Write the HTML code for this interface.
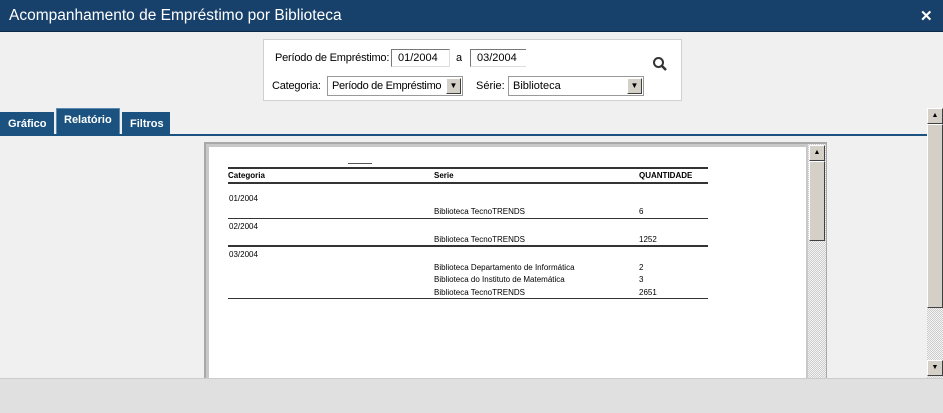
<!DOCTYPE html>
<html><head><meta charset="utf-8"><style>
*{margin:0;padding:0;box-sizing:border-box}
body{width:943px;height:413px;overflow:hidden;background:#f0f0f0;font-family:"Liberation Sans",sans-serif;position:relative}
.abs{position:absolute}
.t{font-size:11px;color:#000;white-space:nowrap;overflow:hidden}
.r{font-size:8px;font-weight:normal;color:#000;white-space:nowrap;position:absolute}
.b{font-weight:bold}
.ln{position:absolute;left:228px;width:480px;background:#333}
</style></head><body>
<div class="abs" style="left:0;top:0;width:943px;height:32px;background:#17406a;border-bottom:1px solid #0d2a47"></div>
<div class="abs" style="left:9px;top:7px;color:#fff;font-size:15.5px">Acompanhamento de Empréstimo por Biblioteca</div>
<div class="abs" style="left:920px;top:7px;color:#fff;font-size:15px;font-weight:bold">✕</div>

<div class="abs" style="left:263px;top:39px;width:419px;height:62px;background:#fff;border:1px solid #d0d0d0"></div>
<div class="abs t" style="left:275px;top:52px;letter-spacing:-0.2px">Período de Empréstimo:</div>
<div class="abs t" style="left:391px;top:49px;width:59px;height:18px;border:1px solid #777;border-right-color:#ddd;border-bottom-color:#ddd;padding:2px 0 0 6px">01/2004</div>
<div class="abs t" style="left:456px;top:52px">a</div>
<div class="abs t" style="left:470px;top:49px;width:56px;height:18px;border:1px solid #777;border-right:none;border-bottom-color:#ddd;padding:2px 0 0 6px">03/2004</div>
<svg class="abs" style="left:652px;top:56px" width="16" height="16" viewBox="0 0 16 16"><circle cx="6.5" cy="6.5" r="4.5" fill="none" stroke="#333" stroke-width="2"/><line x1="10" y1="10" x2="14" y2="14" stroke="#333" stroke-width="2.5"/></svg>
<div class="abs t" style="left:272px;top:80px;letter-spacing:-0.2px">Categoria:</div>
<div class="abs t" style="left:327px;top:76px;width:136px;height:20px;border:1px solid #999;background:#fff;padding:3px 0 0 4px;letter-spacing:-0.3px">Período de Empréstimo</div>
<div class="abs" style="left:446px;top:78px;width:15px;height:16px;background:#d4d0c8;border:1px solid #fff;border-right-color:#404040;border-bottom-color:#404040;font-size:8px;text-align:center;line-height:14px">▼</div>
<div class="abs t" style="left:476px;top:80px">Série:</div>
<div class="abs t" style="left:508px;top:76px;width:136px;height:20px;border:1px solid #999;background:#fff;padding:3px 0 0 4px">Biblioteca</div>
<div class="abs" style="left:627px;top:78px;width:15px;height:16px;background:#d4d0c8;border:1px solid #fff;border-right-color:#404040;border-bottom-color:#404040;font-size:8px;text-align:center;line-height:14px">▼</div>

<div class="abs" style="left:0;top:112px;width:54px;height:23px;background:#1b5280;color:#fff;font-size:11px;font-weight:bold;padding:6px 0 0 8px">Gráfico</div>
<div class="abs" style="left:56px;top:108px;width:64px;height:27px;background:#1b5280;border:1px solid #5d8ab0;border-bottom:none;color:#fff;font-size:11px;font-weight:bold;padding:5px 0 0 7px">Relatório</div>
<div class="abs" style="left:122px;top:112px;width:48px;height:23px;background:#1b5280;color:#fff;font-size:11px;font-weight:bold;padding:6px 0 0 8px">Filtros</div>
<div class="abs" style="left:0;top:134px;width:928px;height:2px;background:#1b5280"></div>

<div class="abs" style="left:204px;top:142px;width:623px;height:236px;background:#a8a8a8"></div>
<div class="abs" style="left:206px;top:144px;width:602px;height:234px;background:#c8c8c8"></div>
<div class="abs" style="left:209px;top:147px;width:597px;height:231px;background:#fff"></div>
<div class="abs" style="left:808px;top:144px;width:18px;height:234px;background:repeating-conic-gradient(#ccc 0 25%,#f4f4f4 0 50%) 0 0/2px 2px"></div>
<div class="abs" style="left:809px;top:145px;width:16px;height:16px;background:#d4d0c8;border:1px solid #fff;border-right-color:#404040;border-bottom-color:#404040;font-size:7px;text-align:center;line-height:14px">▲</div>
<div class="abs" style="left:809px;top:161px;width:16px;height:80px;background:#d4d0c8;border:1px solid #fff;border-right-color:#404040;border-bottom-color:#404040"></div>

<div class="abs" style="left:348px;top:163px;width:24px;height:1px;background:#555"></div>
<div class="ln" style="top:167px;height:2px"></div>
<div class="r b" style="left:228px;top:171px">Categoria</div>
<div class="r b" style="left:434px;top:171px">Serie</div>
<div class="r b" style="left:639px;top:171px">QUANTIDADE</div>
<div class="ln" style="top:182px;height:2px"></div>
<div class="r" style="left:229px;top:194px">01/2004</div>
<div class="r" style="left:434px;top:207px">Biblioteca TecnoTRENDS</div>
<div class="r" style="left:639px;top:207px">6</div>
<div class="ln" style="top:218px;height:1px"></div>
<div class="r" style="left:229px;top:222px">02/2004</div>
<div class="r" style="left:434px;top:235px">Biblioteca TecnoTRENDS</div>
<div class="r" style="left:639px;top:235px">1252</div>
<div class="ln" style="top:245px;height:2px"></div>
<div class="r" style="left:229px;top:250px">03/2004</div>
<div class="r" style="left:434px;top:263px">Biblioteca Departamento de Informática</div>
<div class="r" style="left:639px;top:263px">2</div>
<div class="r" style="left:434px;top:275px">Biblioteca do Instituto de Matemática</div>
<div class="r" style="left:639px;top:275px">3</div>
<div class="r" style="left:434px;top:288px">Biblioteca TecnoTRENDS</div>
<div class="r" style="left:639px;top:288px">2651</div>
<div class="ln" style="top:298px;height:1px"></div>

<div class="abs" style="left:927px;top:108px;width:16px;height:270px;background:repeating-conic-gradient(#ccc 0 25%,#f4f4f4 0 50%) 0 0/2px 2px"></div>
<div class="abs" style="left:927px;top:108px;width:16px;height:16px;background:#d4d0c8;border:1px solid #fff;border-right-color:#404040;border-bottom-color:#404040;font-size:7px;text-align:center;line-height:14px">▲</div>
<div class="abs" style="left:927px;top:124px;width:16px;height:184px;background:#d4d0c8;border:1px solid #fff;border-right-color:#404040;border-bottom-color:#404040"></div>
<div class="abs" style="left:927px;top:360px;width:16px;height:16px;background:#d4d0c8;border:1px solid #fff;border-right-color:#404040;border-bottom-color:#404040;font-size:7px;text-align:center;line-height:14px">▼</div>

<div class="abs" style="left:0;top:378px;width:943px;height:35px;background:#e0e0e0;border-top:1px solid #ccc"></div>
</body></html>
